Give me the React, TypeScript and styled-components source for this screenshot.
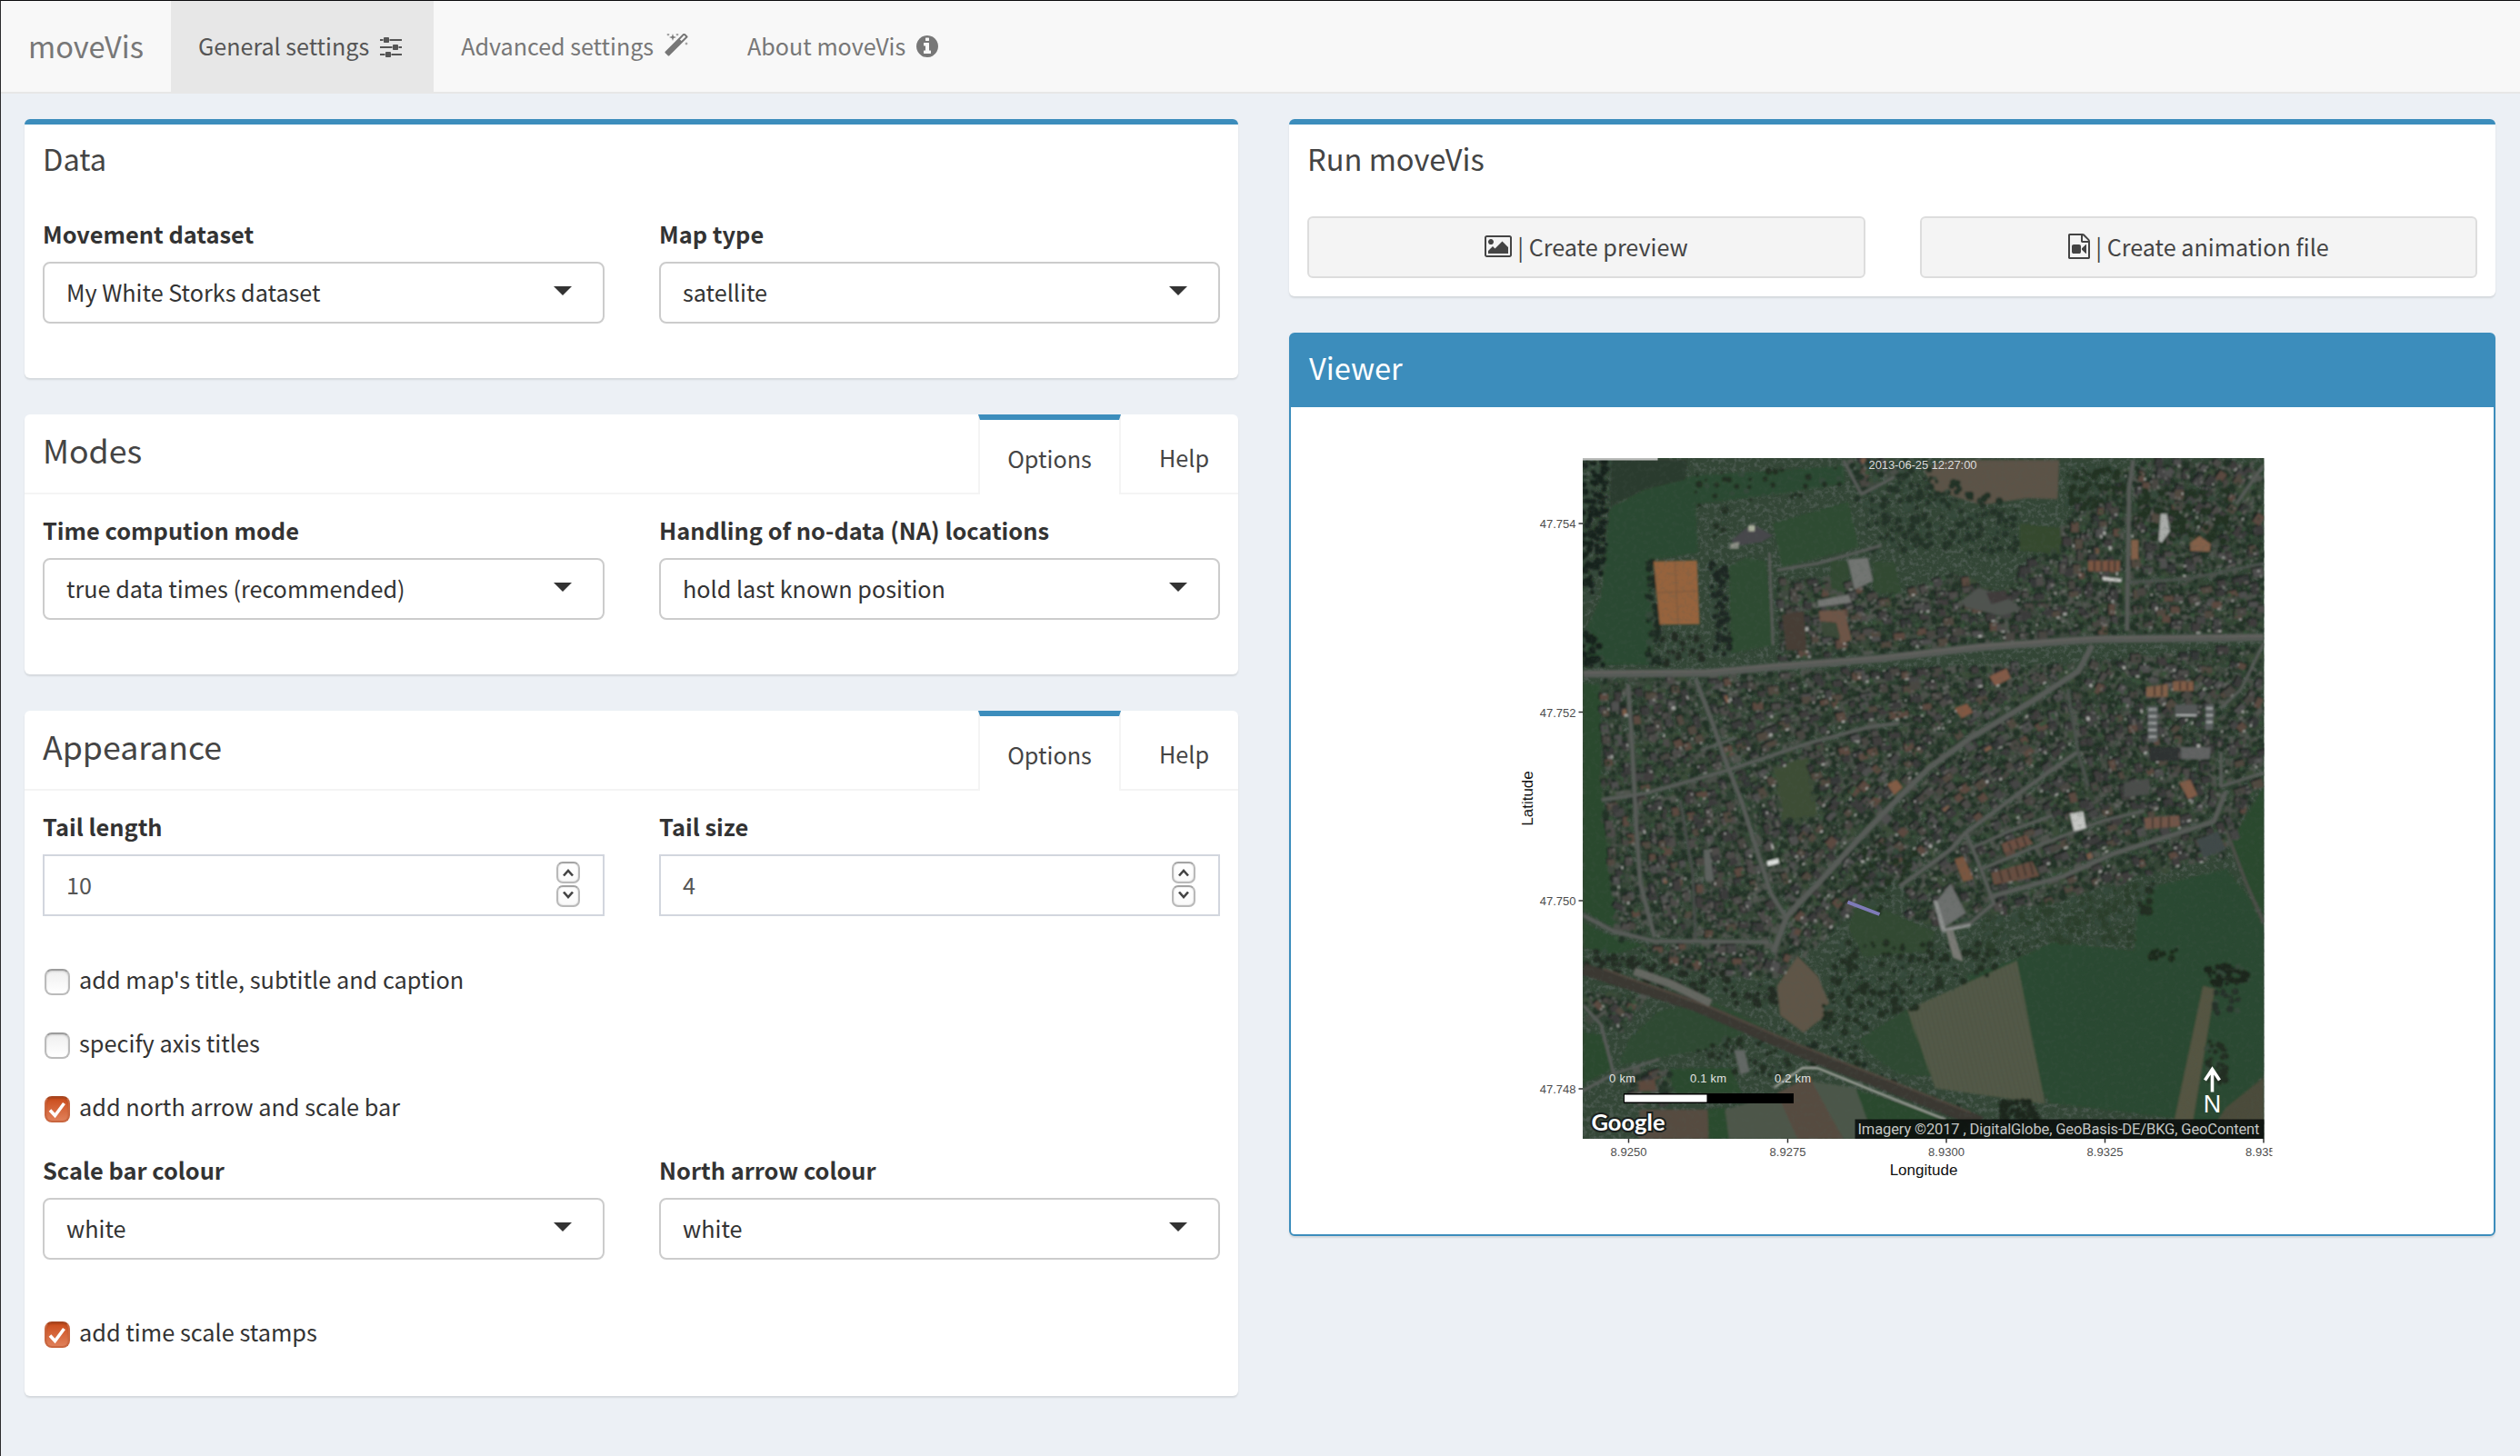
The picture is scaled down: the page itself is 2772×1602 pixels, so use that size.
import React from "react";
import styled, { createGlobalStyle, css } from "styled-components";

const GlobalStyle = createGlobalStyle`
  *, *::before, *::after { box-sizing: border-box; }
  body {
    margin: 0;
    background: #ecf0f5;
    color: #333;
    font-family: "Noto Sans CJK SC", "Open Sans", sans-serif;
    font-size: 25.2px;
    line-height: 38px;
  }
  button, input { font: inherit; color: inherit; }
`;

/* ---------- page frame ---------- */

const Page = styled.div`
  width: 2772px;
  height: 1602px;
  overflow: hidden;
  background: #ecf0f5;
  border-top: 1px solid #0b0b0d;
  border-left: 1px solid #2c2c2e;
`;

const Navbar = styled.nav`
  display: flex;
  height: 102px;
  background: #f8f8f8;
  border-bottom: 2px solid #e7e7e7;
`;

const Brand = styled.div`
  width: 187px;
  padding: 30px 0 0 30px;
  font-size: 32.6px;
  color: #777;
  white-space: nowrap;
`;

const NavItem = styled.a<{ $active?: boolean }>`
  display: flex;
  gap: 12px;
  padding: 30px 35px 0 30px;
  font-size: 25.1px;
  color: ${(p) => (p.$active ? "#555" : "#777")};
  background: ${(p) => (p.$active ? "#e7e7e7" : "transparent")};
  white-space: nowrap;
  svg { margin-top: 6px; }
`;

const Columns = styled.main`
  display: grid;
  grid-template-columns: 1335px 1327px;
  column-gap: 56px;
  padding: 28px 0 0 26px;
`;

const Column = styled.div`
  display: flex;
  flex-direction: column;
  gap: 40px;
`;

/* ---------- boxes ---------- */

const Box = styled.section<{ $height: number; $accent?: boolean }>`
  height: ${(p) => p.$height}px;
  background: #fff;
  border-radius: 6px;
  border-top: ${(p) => (p.$accent ? "6px solid #3c8dbc" : "0")};
  box-shadow: 0 2px 2px rgba(0, 0, 0, 0.1);
`;

const BoxHeader = styled.header`
  height: 81px;
  padding: 20px 20px 0;
  h3 {
    margin: 0;
    font-size: 32.6px;
    font-weight: 400;
    line-height: 34px;
    color: #444;
  }
`;

const BoxBody = styled.div`
  padding: 20px;
`;

const TabHeader = styled.header`
  display: flex;
  height: 88px;
  border-bottom: 2px solid #f4f4f4;
  h3 {
    flex: 1;
    margin: 0;
    padding-left: 20px;
    font-size: 35.7px;
    font-weight: 400;
    line-height: 78px;
    color: #444;
  }
`;

const Tab = styled.button<{ $active?: boolean }>`
  width: ${(p) => (p.$active ? 157 : 129)}px;
  height: 88px;
  padding: ${(p) => (p.$active ? "1px 0 0" : "7px 0 0 10px")};
  border: 0;
  background: #fff;
  color: #444;
  line-height: 40px;
  ${(p) =>
    p.$active
      ? css`
          border-top: 6px solid #3c8dbc;
          border-right: 2px solid #f4f4f4;
          border-left: 2px solid #f4f4f4;
        `
      : css`
          height: 86px;
          background: transparent;
        `}
`;

const FieldRow = styled.div`
  display: grid;
  grid-template-columns: 618px 617px;
  column-gap: 60px;
`;

const Field = styled.div`
  display: flex;
  flex-direction: column;
  gap: 10px;
`;

const Label = styled.label`
  font-weight: 700;
  font-size: 25.4px;
  height: 40px;
`;

const SelectBox = styled.div`
  display: flex;
  align-items: center;
  justify-content: space-between;
  height: 68px;
  padding: 0 34px 2px 24px;
  border: 2px solid #ccc;
  border-radius: 8px;
  background: #fff;
`;

const Caret = styled.i`
  width: 0;
  height: 0;
  margin-top: -2px;
  border: 10px solid transparent;
  border-top-color: #333;
  border-bottom-width: 0;
`;

const NumberBox = styled.div`
  display: flex;
  align-items: center;
  justify-content: space-between;
  height: 68px;
  padding: 0 25px 2px 24px;
  border: 2px solid #d2d6de;
  color: #555;
`;

const Spinner = styled.div`
  display: flex;
  flex-direction: column;
  gap: 2px;
`;

const SpinButton = styled.button`
  display: grid;
  place-items: center;
  width: 26px;
  height: 24px;
  padding: 0;
  border: 2px solid #b9b9b9;
  border-top-color: #a3a3a3;
  border-radius: 7px;
  background: linear-gradient(#fff, #fafafa);
  box-shadow: inset 0 0 2px rgba(0, 0, 0, 0.2);
`;

const CheckRow = styled.label`
  display: flex;
  gap: 10px;
  height: 40px;
  padding-left: 2px;
  font-size: 25.3px;
`;

const CheckMark = styled.span<{ $on?: boolean }>`
  display: grid;
  place-items: center;
  width: 28px;
  height: 29px;
  margin-top: 8px;
  border-radius: 8px;
  border: 2px solid ${(p) => (p.$on ? "#c9663f" : "#bbb")};
  border-top-color: ${(p) => (p.$on ? "#a8451f" : "#9c9c9c")};
  background: ${(p) =>
    p.$on ? "linear-gradient(#cb4d1c, #e0805a)" : "linear-gradient(#efefef, #fff)"};
  box-shadow: inset 0 1px 2px rgba(0, 0, 0, 0.15);
`;

const Checks = styled.div<{ $top: number }>`
  display: flex;
  flex-direction: column;
  gap: 30px;
  margin-top: ${(p) => p.$top}px;
`;

const Spaced = styled.div<{ $top: number }>`
  margin-top: ${(p) => p.$top}px;
`;

/* ---------- right column ---------- */

const ButtonRow = styled.div`
  display: grid;
  grid-template-columns: 614px 613px;
  column-gap: 60px;
`;

const ActionButton = styled.button`
  display: flex;
  align-items: center;
  justify-content: center;
  gap: 6px;
  height: 68px;
  padding: 0 0 2px;
  border: 2px solid #ddd;
  border-radius: 6px;
  background: #f4f4f4;
  color: #444;
  white-space: pre;
`;

const ViewerBox = styled.section`
  height: 994px;
  border: 2px solid #3c8dbc;
  border-radius: 6px;
  background: #fff;
  box-shadow: 0 2px 2px rgba(0, 0, 0, 0.1);
`;

const ViewerHeader = styled.header`
  height: 80px;
  padding: 18px 20px;
  background: #3c8dbc;
  h3 {
    margin: 0;
    font-size: 32.6px;
    font-weight: 400;
    line-height: 36px;
    color: #fff;
  }
`;

const ViewerBody = styled.div`
  display: flex;
  justify-content: center;
  padding-top: 41px;
`;

/* ---------- icons ---------- */

type GlyphProps = { box: string; w: number; h: number; d: string };
const Glyph = ({ box, w, h, d }: GlyphProps) => (
  <svg viewBox={box} width={w} height={h} fill="currentColor">
    <path d={d} />
  </svg>
);

const Sliders = () => (
  <Glyph
    box="0 0 1536 1792"
    w={24}
    h={28}
    d="M352 1408v128h-352v-128h352zm352-128q26 0 45 19t19 45v256q0 26-19 45t-45 19h-256q-26 0-45-19t-19-45v-256q0-26 19-45t45-19h256zm160-384v128h-864v-128h864zm-640-512v128h-224v-128h224zm1312 1024v128h-736v-128h736zm-960-1152q26 0 45 19t19 45v256q0 26-19 45t-45 19h-256q-26 0-45-19t-19-45v-256q0-26 19-45t45-19h256zm640 512q26 0 45 19t19 45v256q0 26-19 45t-45 19h-256q-26 0-45-19t-19-45v-256q0-26 19-45t45-19h256zm320 128v128h-224v-128h224zm0-512v128h-864v-128h864z"
  />
);
const Magic = () => (
  <Glyph
    box="64 64 1664 1792"
    w={26}
    h={28}
    d="M1254 581l293-293-107-107-293 293zm447-293q0 27-18 45l-1286 1286q-18 18-45 18t-45-18l-198-198q-18-18-18-45t18-45l1286-1286q18-18 45-18t45 18l198 198q18 18 18 45zm-1351-190l98 30-98 30-30 98-30-98-98-30 98-30 30-98zm350 162l196 60-196 60-60 196-60-196-196-60 196-60 60-196zm930 478l98 30-98 30-30 98-30-98-98-30 98-30 30-98zm-640-640l98 30-98 30-30 98-30-98-98-30 98-30 30-98z"
  />
);
const Info = () => (
  <Glyph
    box="128 0 1536 1792"
    w={24}
    h={28}
    d="M1152 1376v-160q0-14-9-23t-23-9h-96v-512q0-14-9-23t-23-9h-320q-14 0-23 9t-9 23v160q0 14 9 23t23 9h96v320h-96q-14 0-23 9t-9 23v160q0 14 9 23t23 9h448q14 0 23-9t9-23zm-128-896v-160q0-14-9-23t-23-9h-192q-14 0-23 9t-9 23v160q0 14 9 23t23 9h192q14 0 23-9t9-23zm640 416q0 209-103 385.5t-279.5 279.5-385.5 103-385.5-103-279.5-279.5-103-385.5 103-385.5 279.5-279.5 385.5-103 385.5 103 279.5 279.5 103 385.5z"
  />
);
const Picture = () => (
  <Glyph
    box="0 0 1920 1792"
    w={30}
    h={28}
    d="M640 576q0 80-56 136t-136 56-136-56-56-136 56-136 136-56 136 56 56 136zm1024 384v448h-1408v-192l320-320 160 160 512-512zm96-704h-1600q-13 0-22.5 9.5t-9.5 22.5v1216q0 13 9.5 22.5t22.5 9.5h1600q13 0 22.5-9.5t9.5-22.5v-1216q0-13-9.5-22.5t-22.5-9.5zm160 32v1216q0 66-47 113t-113 47h-1600q-66 0-113-47t-47-113v-1216q0-66 47-113t113-47h1600q66 0 113 47t47 113z"
  />
);
const FileVideo = () => (
  <Glyph
    box="128 0 1536 1792"
    w={24}
    h={28}
    d="M1596 380q28 28 48 76t20 88v1152q0 40-28 68t-68 28h-1344q-40 0-68-28t-28-68v-1600q0-40 28-68t68-28h896q40 0 88 20t76 48zm-444-244v376h376q-10-29-22-41l-313-313q-12-12-41-22zm384 1528v-1024h-416q-40 0-68-28t-28-68v-416h-768v1536h1280zm-640-896q52 0 90 38t38 90v384q0 52-38 90t-90 38h-384q-52 0-90-38t-38-90v-384q0-52 38-90t90-38h384zm492 2q20 8 20 30v576q0 22-20 30-8 2-12 2-14 0-23-9l-265-266v-90l265-266q9-9 23-9 4 0 12 2z"
  />
);

const Chevron = ({ up }: { up?: boolean }) => (
  <svg width="14" height="10" viewBox="0 0 14 10" fill="none" stroke="#444" strokeWidth="2.6">
    <path d={up ? "M2 8.5L7 3L12 8.5" : "M2 0.5L7 6L12 0.5"} />
  </svg>
);

const Tick = () => (
  <svg width="22" height="22" viewBox="0 0 22 22" fill="none" stroke="#fff" strokeWidth="3.6">
    <path d="M3 11.5L8.5 17.5L18.5 4" />
  </svg>
);

/* ---------- aerial map ---------- */

type Pt = [number, number];
const pts = (s: string): Pt[] =>
  s.split(" ").map((p) => p.split(",").map(Number) as unknown as Pt);

const FIELDS: { c: string; p: string }[] = [
  { c: "#2b4a30", p: "232,150 300,110 400,82 500,75 690,62 690,98 560,120 400,140 405,240 310,255 318,470 186,470 186,400 215,330" },
  { c: "#2c3a2f", p: "235,50 385,50 380,90 300,110 232,145" },
  { c: "#2e4c32", p: "552,180 700,136 720,228 570,270" },
  { c: "#2e4c32", p: "466,268 500,250 538,258 552,430 470,446" },
  { c: "#5b5347", p: "848,70 890,50 1113,50 1110,130 1050,128 960,142 870,112" },
  { c: "#34492f", p: "1035,180 1122,190 1116,242 1035,236" },
  { c: "#304931", p: "665,255 698,258 702,322 664,320" },
  { c: "#304931", p: "748,258 790,260 805,325 750,322" },
  { c: "#294a2e", p: "180,508 214,512 216,720 248,1015 180,975" },
  { c: "#294a2e", p: "180,1000 250,1035 300,1045 240,1065 180,1050" },
  { c: "#3e4d36", p: "552,680 620,660 640,780 570,790" },
  { c: "#2c4a30", p: "930,1110 1040,1070 1100,1040 1260,1058 1266,970 1300,925 1440,890 1480,940 1514,1010 1514,1312 1420,1412 1095,1370" },
  { c: "#2a492e", p: "1452,830 1514,720 1514,985 1470,900" },
  { c: "#4f5644", p: "812,1180 1030,1078 1085,1372 870,1340" },
  { c: "#2e4a31", p: "722,1240 815,1178 862,1315 800,1312 740,1268" },
  { c: "#5f5446", p: "560,1130 600,1068 640,1110 668,1180 612,1226 566,1190" },
  { c: "#334a31", p: "720,950 870,1020 850,1058 730,1070 700,1010" },
  { c: "#2e4a31", p: "270,1240 330,1180 440,1165 530,1210 430,1258 250,1292" },
  { c: "#2c482f", p: "180,1225 215,1230 240,1300 180,1330" },
  { c: "#2c482f", p: "350,1300 470,1298 490,1350 355,1350" },
  { c: "#564c41", p: "290,1384 425,1384 425,1444 290,1444" },
  { c: "#2b4b2e", p: "424,1384 458,1380 468,1444 426,1444" },
  { c: "#4d574a", p: "458,1384 570,1350 600,1444 466,1444" },
  { c: "#574c41", p: "560,1350 625,1316 690,1444 600,1444" },
  { c: "#4c574a", p: "628,1326 715,1340 756,1444 690,1444" },
  { c: "#2a482d", p: "715,1342 900,1405 900,1444 750,1444" },
  { c: "#555442", p: "1395,1130 1418,1136 1375,1410 1338,1410" },
  { c: "#4b4c3a", p: "1514,1318 1514,1412 1420,1412 1440,1380" },
];

const ROADS: { w: number; p: string; c?: string }[] = [
  { w: 15, p: "180,489 420,487 560,474 760,458 960,434 1180,418 1514,414" },
  { w: 11, p: "1178,430 1150,484 1060,545 940,620 860,680 800,742 720,828 640,920 580,985 552,1062" },
  { w: 8, p: "1258,50 1250,110 1246,400" },
  { w: 8, p: "400,500 430,580 460,670 490,750 520,850 548,940 578,990" },
  { w: 7, p: "216,748 300,735 460,688 620,632 740,598 800,590" },
  { w: 8, p: "268,510 276,640 284,800 292,920 320,1030" },
  { w: 8, p: "180,985 240,1018 320,1038 420,1038 545,1040" },
  { w: 8, p: "800,926 900,850 930,815 1040,730 1148,650" },
  { w: 9, p: "975,948 1120,905 1220,858 1320,825 1416,792 1440,730" },
  { w: 7, p: "930,815 956,880 985,960 940,1000 880,1015" },
  { w: 6, p: "960,890 1080,838 1200,790 1280,770" },
  { w: 6, p: "945,845 1020,810 1100,780" },
  { w: 5, p: "545,240 552,430" },
  { w: 6, p: "560,276 640,262 765,225" },
  { w: 6, p: "690,50 725,120 790,85" },
  { w: 5, p: "1246,300 1360,295 1514,262", c: "#4e524f" },
  { w: 6, p: "1514,60 1460,140" },
  { w: 6, p: "1430,650 1430,720 1514,692" },
  { w: 5, p: "1514,425 1470,520 1430,560" },
  { w: 5, p: "410,646 480,620" },
  { w: 5, p: "1130,520 1150,650 1170,720", c: "#4e524f" },
  { w: 5, p: "370,750 395,900 400,1030", c: "#4a4e4b" },
  { w: 6, p: "180,1170 215,1210 240,1310 180,1345" },
  { w: 5, p: "240,1310 330,1280" },
  { w: 6, p: "1440,810 1480,920 1514,1000", c: "#4d5049" },
  { w: 24, p: "180,1095 400,1170 620,1270 960,1410", c: "#3b3733" },
  { w: 4, p: "220,1095 420,1170 600,1250 940,1390", c: "#52493f" },
  { w: 16, p: "280,1100 350,1125 430,1165", c: "#666762" },
];

const FORESTS: [string, number, string][] = [
  ["180,50 230,50 225,250 200,330 180,340", 200, "#19221c"],
  ["180,390 215,430 220,470 180,475", 60, "#19221c"],
  ["318,250 335,388 330,470 305,470 306,260", 80, "#1e2a20"],
  ["430,260 462,270 470,460 435,450", 110, "#1d2820"],
  ["335,400 410,400 420,470 335,470", 30, "#222c24"],
  ["180,1050 420,1090 560,1130 560,1180 420,1160 180,1085", 300, "#202b21"],
  ["680,1040 1040,1040 1030,1080 720,1230 730,1300 640,1220", 460, "#202f23"],
  ["700,50 840,50 1030,150 1030,240 740,240", 320, "#233126"],
  ["390,80 690,62 690,110 460,145 460,215 420,215", 110, "#202f23"],
  ["540,1200 720,1280 1000,1400 900,1400 600,1280", 110, "#1e2920"],
  ["1400,1090 1480,1085 1485,1120 1415,1130", 80, "#1c261e"],
  ["1410,1140 1465,1140 1465,1185 1420,1185", 22, "#26332a"],
  ["1400,1240 1440,1250 1440,1330 1405,1330", 50, "#202d23"],
  ["1270,920 1300,915 1300,980 1265,985", 25, "#202d23"],
  ["1290,1060 1345,1050 1335,1080 1280,1078", 24, "#1d291e"],
  ["995,1370 1065,1360 1070,1410 1000,1412", 70, "#1d271f"],
  ["440,1240 560,1230 640,1290 560,1320 480,1310 400,1260", 100, "#212d23"],
  ["1130,60 1240,60 1240,150 1130,150", 80, "#203023"],
  ["1260,110 1450,110 1440,220 1260,220", 130, "#203023"],
  ["900,1000 1270,920 1260,1050 1100,1040 930,1080", 230, "#2a3d2a"],
  ["740,830 860,850 830,900 760,980 700,930", 100, "#213024"],
];

const VILLAGE = [
  "218,500 1130,470 1514,430 1514,690 1440,860 1260,910 900,1010 820,990 800,900 690,1000 560,1110 400,1100 240,1035 218,740",
  "560,300 640,290 800,330 900,280 1000,330 1150,150 1260,52 1514,52 1514,408 1180,410 740,450 570,460",
  "700,50 800,50 780,100 720,95",
  "180,1140 300,1150 250,1230 190,1200",
  "270,1300 350,1305 350,1370 270,1370",
].map(pts);

const inside = ([x, y]: Pt, poly: Pt[]) => {
  let hit = false;
  for (let i = 0, j = poly.length - 1; i < poly.length; j = i++) {
    const [xi, yi] = poly[i];
    const [xj, yj] = poly[j];
    if (yi > y !== yj > y && x < ((xj - xi) * (y - yi)) / (yj - yi) + xi) hit = !hit;
  }
  return hit;
};

const segDistance = ([x, y]: Pt, [ax, ay]: Pt, [bx, by]: Pt) => {
  const dx = bx - ax;
  const dy = by - ay;
  const t = Math.max(0, Math.min(1, ((x - ax) * dx + (y - ay) * dy) / (dx * dx + dy * dy)));
  return Math.hypot(x - ax - t * dx, y - ay - t * dy);
};

const makeRandom = (seed: number) => () => {
  seed = (seed * 1664525 + 1013904223) >>> 0;
  return seed / 4294967296;
};

const roadLines = ROADS.map((r) => ({ w: r.w, p: pts(r.p) }));
const fieldPolys = FIELDS.map((f) => pts(f.p));

const nearestRoad = (p: Pt) => {
  let best = 999;
  let angle = 0;
  roadLines.forEach(({ w, p: line }) => {
    for (let i = 1; i < line.length; i++) {
      const d = segDistance(p, line[i - 1], line[i]) - w / 2;
      if (d < best) {
        best = d;
        angle = Math.atan2(line[i][1] - line[i - 1][1], line[i][0] - line[i - 1][0]);
      }
    }
  });
  return { best, angle };
};

const quad = (x: number, y: number, w: number, h: number, a: number) => {
  const c = Math.cos(a);
  const s = Math.sin(a);
  const corner = (u: number, v: number) =>
    `${(x + u * c - v * s).toFixed(1)},${(y + u * s + v * c).toFixed(1)}`;
  return `M${corner(-w, -h)}L${corner(w, -h)}L${corner(w, h)}L${corner(-w, h)}Z`;
};

const blob = (x: number, y: number, r: number) =>
  `M${(x - r).toFixed(1)},${y.toFixed(1)}a${r.toFixed(1)},${r.toFixed(1)} 0 1 0 ${(2 * r).toFixed(1)},0a${r.toFixed(1)},${r.toFixed(1)} 0 1 0 ${(-2 * r).toFixed(1)},0`;

const buildVillage = () => {
  const rnd = makeRandom(20130625);
  const layers: Record<string, string> = {};
  const add = (c: string, d: string) => {
    layers[c] = (layers[c] || "") + d;
  };
  const roofs = ["#3b3b3b", "#454545", "#363738", "#4e4c49", "#4a4743", "#3f3e3d", "#4f504f", "#51483f", "#3a3a3a", "#5b4a3f"];
  const plots = ["#40493f", "#344536", "#3a4c38", "#4b5049", "#2f4031", "#51554f"];
  const place = (step: number, draw: (x: number, y: number, a: number, d: number) => void) => {
    for (let y = 50; y < 1440; y += step) {
      for (let x = 182; x < 1512; x += step) {
        const p: Pt = [x + (rnd() - 0.5) * step, y + (rnd() - 0.5) * step];
        if (!VILLAGE.some((v) => inside(p, v))) continue;
        if (fieldPolys.some((f) => inside(p, f))) continue;
        const { best, angle } = nearestRoad(p);
        if (best > 3) draw(p[0], p[1], angle, best);
      }
    }
  };
  place(12, (x, y, a) => add(plots[Math.floor(rnd() * plots.length)], quad(x, y, 4 + rnd() * 7, 3 + rnd() * 5, a)));
  place(16, (x, y) => add("#233026", blob(x, y, 2.5 + rnd() * 5)));
  place(25, (x, y, a, d) => {
    if (d < 7 || rnd() < 0.1) return;
    const w = 6 + rnd() * 5;
    const h = 5 + rnd() * 4;
    add("#1f2422", quad(x - 3, y - 3, w, h, a));
    add(roofs[Math.floor(rnd() * roofs.length)], quad(x, y, w, h, a));
    if (rnd() < 0.6) add("#5e5c59", quad(x + 2, y + h * 0.5, w * 0.7, h * 0.35, a));
    if (rnd() < 0.07) add("#7b5b47", quad(x + 1, y + 1, w * 0.7, h * 0.6, a));
    if (rnd() < 0.24) add("#b4b5b1", quad(x + w * 0.5, y + h, 1.2 + rnd() * 3, 1.2 + rnd() * 2, a));
  });
  place(11, (x, y, a) => {
    const k = rnd();
    if (k < 0.2) add("#727370", quad(x, y, 1 + rnd() * 3, 0.8 + rnd(), a));
    else if (k < 0.42) add("#28382a", blob(x, y, 1.5 + rnd() * 3));
    else if (k < 0.54) add("#39523a", blob(x, y, 1.5 + rnd() * 3));
    else if (k < 0.57) add("#d2d3cf", quad(x, y, 1 + rnd() * 1.8, 1.2, a));
  });
  FORESTS.forEach(([poly, n, colour]) => {
    const shape = pts(poly);
    const xs = shape.map((p) => p[0]);
    const ys = shape.map((p) => p[1]);
    const x0 = Math.min(...xs);
    const y0 = Math.min(...ys);
    for (let i = 0; i < n; i++) {
      const p: Pt = [x0 + rnd() * (Math.max(...xs) - x0), y0 + rnd() * (Math.max(...ys) - y0)];
      if (inside(p, shape)) add(i % 4 === 0 ? "#34483a" : colour, blob(p[0], p[1], 2.5 + rnd() * 5));
    }
  });
  return Object.entries(layers);
};

const villageLayers = buildVillage();

const LANDMARKS: [string, string][] = [
  ["#46464c", "470,215 510,180 552,205 530,218 480,226"],
  ["#8d9086", "468,222 486,218 484,232 468,232"],
  ["#b0b5a0", "504,184 516,184 516,196 504,196"],
  ["#727472", "698,254 738,250 748,298 712,316"],
  ["#767775", "640,338 700,326 706,342 640,352"],
  ["#6e5447", "642,360 692,358 706,420 684,426 676,384 644,380"],
  ["#3b4937", "646,382 676,384 684,414 650,412"],
  ["#463c35", "570,368 612,360 618,440 578,440"],
  ["#a9aca9", "1312,160 1324,160 1330,196 1314,220 1308,216"],
  ["#7a5542", "1170,256 1232,256 1232,278 1170,278"],
  ["#836048", "1254,214 1268,214 1268,254 1254,254"],
  ["#84604a", "1370,220 1388,206 1410,222 1408,238 1370,236"],
  ["#c9c9c6", "1198,290 1236,294 1234,300 1198,297"],
  ["#4f524f", "920,340 955,312 1005,328 1040,356 1000,370 930,352"],
  ["#403a3a", "970,322 1008,318 1012,336 980,346"],
  ["#6d706e", "870,960 900,920 930,980 880,1015"],
  ["#8f9290", "866,955 874,955 890,1012 940,1002 940,1008 884,1020"],
  ["#7a7a74", "890,1015 905,1015 925,1080 905,1072"],
  ["#7a563f", "908,870 925,864 945,910 925,916"],
  ["#6d5042", "1000,838 1048,820 1062,838 1006,856"],
  ["#684e41", "980,898 1060,874 1074,904 985,922"],
  ["#735749", "1280,785 1348,780 1350,802 1282,808"],
  ["#414a48", "1382,830 1424,812 1440,850 1396,866"],
  ["#c4c6c3", "1134,776 1160,772 1166,806 1142,812"],
  ["#e0e2df", "540,874 562,868 564,878 542,884"],
  ["#5c6061", "1286,556 1306,556 1306,628 1288,628"],
  ["#5c6061", "1400,552 1416,552 1414,604 1400,604"],
  ["#555858", "1340,552 1384,552 1384,576 1340,576"],
  ["#626464", "1352,640 1410,640 1408,664 1352,664"],
  ["#2f3032", "1290,640 1348,640 1348,668 1290,668"],
  ["#4b4d4c", "1240,712 1290,704 1290,736 1240,742"],
  ["#5f6361", "416,850 428,850 436,914 420,914"],
  ["#835c45", "776,716 794,706 806,722 790,738"],
  ["#835843", "908,560 932,550 944,568 922,580"],
  ["#835a46", "976,494 1010,478 1018,498 988,514"],
  ["#82604a", "1284,516 1326,510 1326,536 1284,536"],
  ["#825d46", "1336,504 1376,504 1376,524 1336,524"],
  ["#825b47", "1348,712 1370,706 1384,738 1366,746"],
  ["#636765", "476,1262 496,1262 506,1306 488,1312"],
  ["#5d483c", "288,1326 320,1322 324,1344 290,1346"],
];

const ROOF_GAPS =
  "M1182,257V277M1196,257V277M1210,257V277M1222,257V277M1014,836L1020,852M1028,830L1034,846M1042,824L1048,842M996,894L1002,916M1012,890L1018,912M1028,885L1034,908M1042,880L1048,904M1056,877L1062,902M1296,784V806M1312,783V805M1328,782V804M1300,514V534M1314,512V534M1350,506V522M1364,506V522";
const BALCONIES =
  "M1288,562H1304M1288,576H1304M1288,590H1304M1288,604H1304M1288,618H1304M1401,560H1414M1401,574H1414M1401,588H1414M1342,574H1382";

const TICKS_Y: [number, string][] = [
  [576.5, "47.754"],
  [784, "47.752"],
  [991.5, "47.750"],
  [1198.5, "47.748"],
];
const TICKS_X: [number, string][] = [
  [1791, "8.9250"],
  [1966, "8.9275"],
  [2140.5, "8.9300"],
  [2315, "8.9325"],
  [2489.5, "8.9350"],
];

const MapSvg = styled.svg`
  display: block;
  font-family: "Liberation Sans", Arial, sans-serif;
`;

const AerialMap = () => (
  <MapSvg width="880" height="830" viewBox="1641.5 489.5 880 830">
    <defs>
      <clipPath id="frame">
        <rect x="1740.5" y="504.5" width="749.5" height="749" />
      </clipPath>
      <clipPath id="plotEdge">
        <rect x="1641" y="490" width="858" height="830" />
      </clipPath>
      <pattern id="furrows" width="9" height="40" patternUnits="userSpaceOnUse" patternTransform="rotate(-13)">
        <rect width="3" height="40" fill="#686752" opacity="0.35" />
      </pattern>
      <filter id="grain" x="0" y="0" width="100%" height="100%">
        <feTurbulence type="fractalNoise" baseFrequency="0.2" numOctaves="3" seed="4" />
        <feColorMatrix values="0 0 0 0 0.08  0 0 0 0 0.11  0 0 0 0 0.09  0 3.2 0 0 -1.45" />
      </filter>
      <filter id="soften">
        <feGaussianBlur stdDeviation="0.8" />
      </filter>
    </defs>

    <g clipPath="url(#frame)">
      <rect x="1740" y="504" width="751" height="750" fill="#334636" />
      <rect x="1740" y="504" width="751" height="750" filter="url(#grain)" opacity="0.8" />
      <g filter="url(#soften)">
        <g transform="translate(1640 480) scale(0.5612 0.5357)">
          {FIELDS.map((f) => (
            <polygon key={f.p} points={f.p} fill={f.c} />
          ))}
          <polygon points="812,1180 1030,1078 1085,1372 870,1340" fill="url(#furrows)" />
          {villageLayers.map(([c, d]) => (
            <path key={c} d={d} fill={c} />
          ))}
          {ROADS.map((r) => (
            <polyline
              key={r.p}
              points={r.p}
              fill="none"
              stroke={r.c || "#595c59"}
              strokeWidth={r.w}
              strokeLinejoin="round"
            />
          ))}
          <polyline
            points="180,486 420,484 560,471 760,455 960,431 1180,415 1514,411"
            fill="none"
            stroke="#676561"
            strokeWidth="3"
          />
          {LANDMARKS.map(([c, p]) => (
            <polygon key={p} points={p} fill={c} />
          ))}
          <path d={ROOF_GAPS} stroke="#3b302b" strokeWidth="3" fill="none" />
          <path d={BALCONIES} stroke="#aeb1b1" strokeWidth="3.5" fill="none" />
          <polygon points="318,258 403,256 408,387 330,388" fill="#96633e" />
          <path d="M322,322L405,319M360,258L366,387" stroke="#7f5a3e" strokeWidth="2.5" fill="none" />
          <polyline
            points="555,1338 610,1298 640,1299 760,1350 890,1404"
            fill="none"
            stroke="#aaaca5"
            strokeWidth="4"
          />
        </g>
      </g>
      <rect x="1740" y="504" width="751" height="750" filter="url(#grain)" opacity="0.14" />
      <path d="M2032 993L2067 1006.5" stroke="#7f7bb8" strokeWidth="4" />
      <rect x="1740" y="504" width="83" height="3" fill="#b9bbb9" />

      <text x="2055" y="516" fontSize="13" fill="#dcdcdc" textLength="119">
        2013-06-25 12:27:00
      </text>

      <g fontSize="13" fill="#e2e2e2">
        <text x="1769.5" y="1191" textLength="29">0 km</text>
        <text x="1858.5" y="1191" textLength="40">0.1 km</text>
        <text x="1951.5" y="1191" textLength="40">0.2 km</text>
      </g>
      <rect x="1785.5" y="1203.5" width="187" height="11" fill="#000" />
      <rect x="1786.5" y="1205" width="90.5" height="8" fill="#fff" />

      <text
        x="1750"
        y="1244"
        fontFamily="Lato, sans-serif"
        fontWeight="700"
        fontSize="25"
        fill="#fff"
        stroke="#1c211e"
        strokeWidth="4"
        paintOrder="stroke"
        textLength="81"
        lengthAdjust="spacingAndGlyphs"
      >
        Google
      </text>

      <rect x="2040" y="1232" width="451" height="22" fill="#0a0f0c" opacity="0.88" />
      <text
        x="2043"
        y="1248"
        fontFamily="Roboto, sans-serif"
        fontSize="16.5"
        fill="#c4c6c4"
        textLength="442"
        xmlSpace="preserve"
      >
        Imagery ©2017 , DigitalGlobe, GeoBasis-DE/BKG, GeoContent
      </text>

      <path d="M2433 1202V1177M2425 1189L2433 1177L2441 1189" stroke="#fff" strokeWidth="3.6" fill="none" />
      <text x="2433" y="1224" fontSize="27" fill="#fff" textAnchor="middle">
        N
      </text>
    </g>

    <g clipPath="url(#plotEdge)" fontSize="13" fill="#4d4d4d" stroke="none">
      {TICKS_Y.map(([y, t]) => (
        <g key={t}>
          <path d={`M1736 ${y}H1740.5`} stroke="#333" strokeWidth="1.5" />
          <text x="1733" y={y + 5} textAnchor="end">{t}</text>
        </g>
      ))}
      {TICKS_X.map(([x, t]) => (
        <g key={t}>
          <path d={`M${x} 1253.5V1258`} stroke="#333" strokeWidth="1.5" />
          <text x={x} y="1272" textAnchor="middle">{t}</text>
        </g>
      ))}
    </g>
    <g fontSize="17" fill="#111" textAnchor="middle">
      <text x="2115.5" y="1293">Longitude</text>
      <text transform="translate(1685 879) rotate(-90)">Latitude</text>
    </g>
  </MapSvg>
);

/* ---------- composed controls ---------- */

const Select = ({ label, value }: { label: string; value: string }) => (
  <Field>
    <Label>{label}</Label>
    <SelectBox>
      {value}
      <Caret />
    </SelectBox>
  </Field>
);

const NumberField = ({ label, value }: { label: string; value: string }) => (
  <Field>
    <Label>{label}</Label>
    <NumberBox>
      {value}
      <Spinner>
        <SpinButton aria-label="increase"><Chevron up /></SpinButton>
        <SpinButton aria-label="decrease"><Chevron /></SpinButton>
      </Spinner>
    </NumberBox>
  </Field>
);

const Check = ({ on, children }: { on?: boolean; children: React.ReactNode }) => (
  <CheckRow>
    <CheckMark $on={on}>{on && <Tick />}</CheckMark>
    {children}
  </CheckRow>
);

const TabbedHeader = ({ title }: { title: string }) => (
  <TabHeader>
    <h3>{title}</h3>
    <Tab $active>Options</Tab>
    <Tab>Help</Tab>
  </TabHeader>
);

export default function App() {
  return (
    <>
      <GlobalStyle />
      <Page>
        <Navbar>
          <Brand>moveVis</Brand>
          <NavItem $active>General settings <Sliders /></NavItem>
          <NavItem>Advanced settings <Magic /></NavItem>
          <NavItem>About moveVis <Info /></NavItem>
        </Navbar>

        <Columns>
          <Column>
            <Box $height={285} $accent>
              <BoxHeader><h3>Data</h3></BoxHeader>
              <BoxBody>
                <FieldRow>
                  <Select label="Movement dataset" value="My White Storks dataset" />
                  <Select label="Map type" value="satellite" />
                </FieldRow>
              </BoxBody>
            </Box>

            <Box $height={286}>
              <TabbedHeader title="Modes" />
              <BoxBody>
                <FieldRow>
                  <Select label="Time compution mode" value="true data times (recommended)" />
                  <Select label="Handling of no-data (NA) locations" value="hold last known position" />
                </FieldRow>
              </BoxBody>
            </Box>

            <Box $height={754}>
              <TabbedHeader title="Appearance" />
              <BoxBody>
                <FieldRow>
                  <NumberField label="Tail length" value="10" />
                  <NumberField label="Tail size" value="4" />
                </FieldRow>
                <Checks $top={50}>
                  <Check>add map's title, subtitle and caption</Check>
                  <Check>specify axis titles</Check>
                  <Check on>add north arrow and scale bar</Check>
                </Checks>
                <Spaced $top={30}>
                  <FieldRow>
                    <Select label="Scale bar colour" value="white" />
                    <Select label="North arrow colour" value="white" />
                  </FieldRow>
                </Spaced>
                <Checks $top={60}>
                  <Check on>add time scale stamps</Check>
                </Checks>
              </BoxBody>
            </Box>
          </Column>

          <Column>
            <Box $height={195} $accent>
              <BoxHeader><h3>Run moveVis</h3></BoxHeader>
              <BoxBody>
                <ButtonRow>
                  <ActionButton><Picture />| Create preview</ActionButton>
                  <ActionButton><FileVideo />| Create animation file</ActionButton>
                </ButtonRow>
              </BoxBody>
            </Box>

            <ViewerBox>
              <ViewerHeader><h3>Viewer</h3></ViewerHeader>
              <ViewerBody><AerialMap /></ViewerBody>
            </ViewerBox>
          </Column>
        </Columns>
      </Page>
    </>
  );
}
